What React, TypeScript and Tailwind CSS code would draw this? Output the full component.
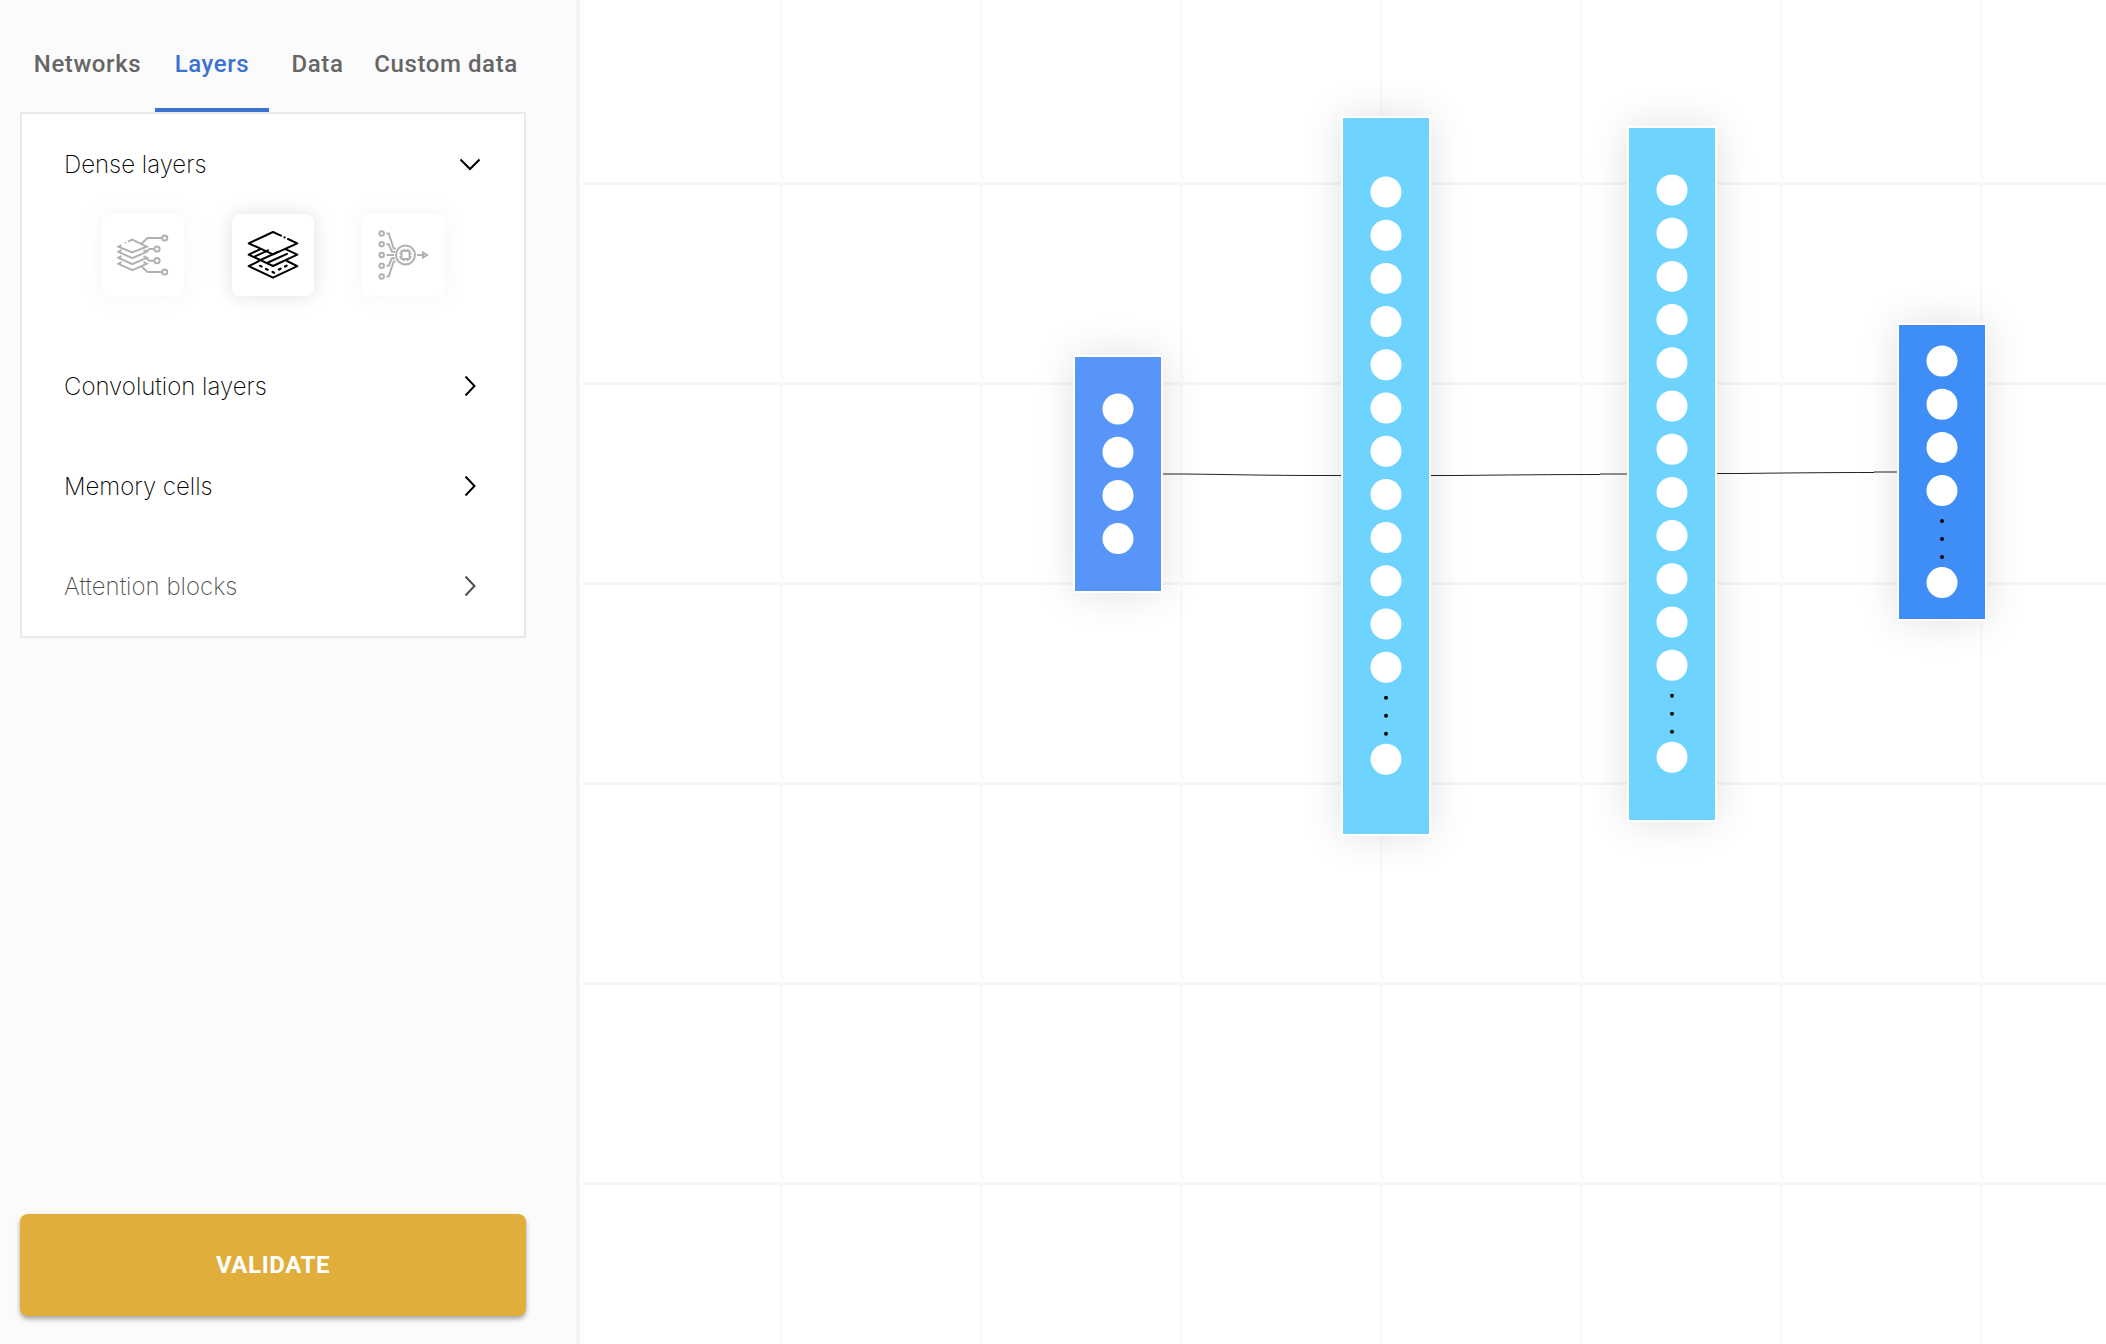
import type { ReactNode } from "react";

const tabs = ["Networks", "Layers", "Data", "Custom data"];
const tabWidth: Record<string, string> = {
  Networks: "w-[135px]",
  Layers: "w-[114px]",
  Data: "w-[97px]",
  "Custom data": "w-[160px]",
};

function DenseOutputIcon() {
  return (
    <svg viewBox="0 0 52 52" className="size-[52px]" fill="none" stroke="currentColor" strokeWidth="2">
      <path d="M11 12.700l4.300-2 14.400 7L15.300 23.500 1.300 17.700l3.200-1.600M8 14.200l1.200-.6" />
      <path d="M4.500 21.200l-3.200 1.600 14 6.400 14.400-6.400-3.200-1.600M4.500 27.200l-3.200 1.600 14 6.400 14.400-6.400-3.200-1.600M4.500 33.200l-3.200 1.600 14 6.400 14.400-6.400-3.200-1.600" />
      <path d="M24.500 14.700l6-5.700H45M29 22.700l3.500-2.700H37M29 29l3.500 2.700H37M24.500 37.300l6 5.700H45" />
      <circle cx="47.700" cy="9" r="2.600" />
      <circle cx="40" cy="20" r="2.600" />
      <circle cx="40" cy="31.700" r="2.600" />
      <circle cx="47.700" cy="43" r="2.600" />
    </svg>
  );
}

function StackIcon() {
  return (
    <svg viewBox="0 0 52 52" className="size-[52px]" fill="none" stroke="currentColor" strokeWidth="2" strokeLinejoin="round" strokeLinecap="round">
      <path d="M34 6.600 26 3 1.700 14.300 26 25.300 50.300 14.300 41 10M37.400 8.400l.3.100" />
      <path d="M13 20.300 1.700 25.700 26 37 50.300 25.700 39 20.300M7 27.800l14-6.500M13.500 31l18-8.300M20 34l20-9.200" />
      <path d="M12 32 1.700 37.200 26 48.700 50.300 37.200 40 32" />
      <path d="M13 36.800l1.600.8M19 40l1.600.8M25.500 43l1.600.8M32 40.500l1.600-.8M38 37.500l1.600-.8" strokeWidth="2.200" />
    </svg>
  );
}

function ProcessorIcon() {
  return (
    <svg viewBox="0 0 52 52" className="size-[52px]" fill="none" stroke="currentColor" strokeWidth="2">
      {[4.5, 15.3, 26, 36.700, 47.500].map((y) => (
        <circle key={y} cx="4.700" cy={y} r="2.200" />
      ))}
      <path d="M9.500 4.500h2.200l5 15h2M9.500 15.300h2.200l3.300 7.500h3M9.500 26H17M9.500 36.700h2.200l3.300-7.500h3M9.500 47.500h2.200l5-15h2" />
      <circle cx="28.500" cy="26" r="9.500" />
      <rect x="24.500" y="22" width="8" height="8" />
      <path d="M27 20v2M30.500 20v2M27 30v2M30.500 30v2M22.500 24.500h2M22.500 28h2M32.500 24.500h2M32.500 28h2M40 26h6M46 23.500v5l4-2.500z" />
    </svg>
  );
}

function Chevron({ open }: { open?: boolean }) {
  return (
    <svg viewBox="0 0 20 20" className="size-5" fill="none" stroke="currentColor" strokeWidth="2" aria-hidden="true">
      <path d={open ? "M.5 5.500 10 15 19.500 5.500" : "M5.500.5 14.500 10 5.500 19.500"} />
    </svg>
  );
}

function LayerTile({ label, active, children }: { label: string; active?: boolean; children: ReactNode }) {
  return (
    <button
      aria-label={label}
      className={
        active
          ? "flex size-[82px] items-center justify-center rounded-lg bg-white text-black shadow-[0_0_20px_rgba(0,0,0,0.12)]"
          : "flex size-[82px] items-center justify-center rounded-lg bg-white text-black opacity-30 shadow-[0_0_20px_rgba(0,0,0,0.12)]"
      }
    >
      {children}
    </button>
  );
}

function Section({ title, open, muted }: { title: string; open?: boolean; muted?: boolean }) {
  return (
    <button
      aria-expanded={!!open}
      className={
        muted
          ? "flex h-[100px] w-full items-center justify-between pr-11 pl-[42px] text-black opacity-70"
          : "flex h-[100px] w-full items-center justify-between pr-11 pl-[42px] text-black"
      }
    >
      <span className="pt-0.5">{title}</span>
      <Chevron open={open} />
    </button>
  );
}

const PITCH = 43.2;

function Neurons({ count, truncated }: { count: number; truncated?: boolean }) {
  const lastRow = 16 + (count - 1) * PITCH;
  const height = truncated ? lastRow + 108 : lastRow + 16;
  return (
    <svg width="32" height={height} viewBox={`0 0 32 ${height}`} aria-hidden="true">
      {Array.from({ length: count }, (_, i) => (
        <circle key={i} cx="16" cy={16 + i * PITCH} r="15.500" fill="#fff" />
      ))}
      {truncated && (
        <>
          {[30.5, 48.500, 66.500].map((d) => (
            <circle key={d} cx="16" cy={lastRow + d} r="2" fill="#000" />
          ))}
          <circle cx="16" cy={lastRow + 92} r="15.500" fill="#fff" />
        </>
      )}
    </svg>
  );
}

const nodes = [
  { name: "Input layer", place: "left-[493px] top-[355px] h-[238px] bg-[#5796f8]", count: 4, truncated: false },
  { name: "Dense layer 1", place: "left-[761px] top-[116px] h-[720px] bg-[#6fd4fd]", count: 12, truncated: true },
  { name: "Dense layer 2", place: "left-[1047px] top-[126px] h-[696px] bg-[#6fd4fd]", count: 12, truncated: true },
  { name: "Output layer", place: "left-[1317px] top-[323px] h-[298px] bg-[#3f8ef7]", count: 4, truncated: true },
];

export default function App() {
  return (
    <div className="flex min-h-screen bg-white font-[Roboto,sans-serif] text-2xl leading-8">
      <aside className="flex w-[580px] shrink-0 flex-col border-r-4 border-[#f3f3f3] bg-[#fbfbfb] pr-[50px] pb-7 pl-5">
        <div role="tablist" className="flex h-28 font-medium tracking-wide text-[#666]">
          {tabs.map((t) => (
            <button
              key={t}
              role="tab"
              aria-selected={t === "Layers"}
              className={`${tabWidth[t]} shrink-0 whitespace-nowrap border-b-4 pt-5 ${
                t === "Layers" ? "border-[#3b73d1] text-[#3b73d1]" : "border-transparent"
              }`}
            >
              {t}
            </button>
          ))}
        </div>
        <section className="border-2 border-[#e9e9e9] bg-white font-[Inter,sans-serif] font-extralight">
          <Section title="Dense layers" open />
          <div className="flex justify-center gap-12 pb-10">
            <LayerTile label="Dense output"><DenseOutputIcon /></LayerTile>
            <LayerTile label="Stacked dense" active><StackIcon /></LayerTile>
            <LayerTile label="Processing unit"><ProcessorIcon /></LayerTile>
          </div>
          <Section title="Convolution layers" />
          <Section title="Memory cells" />
          <Section title="Attention blocks" muted />
        </section>
        <button className="mt-auto h-[102px] rounded-lg bg-[#e1ae3b] font-bold tracking-wide text-white shadow-[0_3px_5px_rgba(0,0,0,0.35)]">
          VALIDATE
        </button>
      </aside>
      <main className="relative flex-1 overflow-hidden bg-white">
        <svg className="absolute inset-0 h-full w-full" aria-hidden="true">
          <defs>
            <pattern id="grid" width="200" height="200" patternUnits="userSpaceOnUse">
              <rect y="182" width="200" height="3" fill="#f6f6f6" />
              <rect width="3" height="200" fill="#fafafa" />
            </pattern>
          </defs>
          <rect x="2" width="100%" height="100%" fill="url(#grid)" />
        </svg>
        {nodes.map((n) => (
          <div
            key={n.name}
            role="img"
            aria-label={n.name}
            className={`absolute flex w-[90px] items-center justify-center border-2 border-white shadow-[0_0_40px_rgba(0,0,0,0.12)] ${n.place}`}
          >
            <Neurons count={n.count} truncated={n.truncated} />
          </div>
        ))}
        <svg className="absolute inset-0 h-full w-full" fill="none" stroke="#222" strokeWidth="1" aria-hidden="true">
          <path d="M583 474h22C650 474.500 690 475.500 739 475.500h22" />
          <path d="M851 475.500h26C920 475 980 474.500 1020 474.500M1020 474h27" />
          <path d="M1137 473.500h22C1200 473 1250 472.500 1294 472.500M1294 472h23" />
        </svg>
      </main>
    </div>
  );
}
